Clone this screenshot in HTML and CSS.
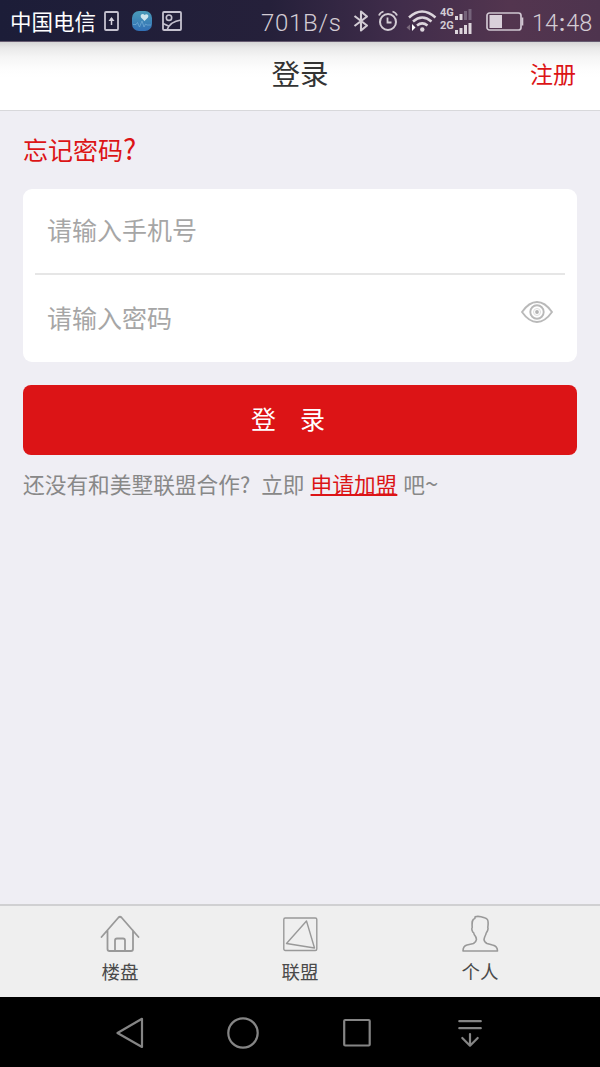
FILE: index.html
```html
<!DOCTYPE html>
<html lang="zh-CN">
<head>
<meta charset="utf-8">
<title>登录</title>
<link rel="stylesheet" href="styles.css">
</head>
<body>
<div class="statusbar">
  <span class="carrier">中国电信</span>
  <svg class="ic-upload" width="15" height="20" viewBox="0 0 15 20"><rect x="1" y="1" width="13" height="18" rx="1" fill="none" stroke="#c5c2cf" stroke-width="1.8"/><path d="M7.500 14V7" fill="none" stroke="#d5d2dc" stroke-width="1.500"/><path d="M4.500 10L7.500 6l3 4z" fill="#d5d2dc"/></svg>
  <svg class="ic-health" width="20" height="20" viewBox="0 0 20 20"><defs><linearGradient id="hg" x1="0" y1="0" x2="0" y2="1"><stop offset="0" stop-color="#4a9bb9"/><stop offset="1" stop-color="#316fb5"/></linearGradient></defs><rect width="20" height="20" rx="7" fill="url(#hg)"/><path d="M12.500 10L9 6.500C7.500 3.500 11 1.800 12.500 4c2-2 5-.3 3.500 2.500z" fill="#cde5ee"/><path d="M1 13.500h3l1.500-2 2 4.500L10 10l2 6 1.500-3L15 14h4" fill="none" stroke="#7fb6dc" stroke-width=".6"/></svg>
  <svg class="ic-picture" width="20" height="20" viewBox="0 0 20 20"><rect x="1" y="1" width="18" height="18" rx="1" fill="none" stroke="#c5c2cf" stroke-width="1.800"/><circle cx="7" cy="6.700" r="2.700" fill="none" stroke="#c5c2cf" stroke-width="1.600"/><path d="M1 12.500l5.500 2.500M5 19Q8 10.500 19 9" fill="none" stroke="#c5c2cf" stroke-width="1.700"/></svg>
  <span class="speed">701B/s</span>
  <svg class="ic-bt" width="16" height="22" viewBox="0 0 16 22"><path d="M1.500 6L14 15.500 8 20.500V1.500L14 6.500 1.500 16" fill="none" stroke="#d3cdd5" stroke-width="2.100" stroke-linejoin="round"/></svg>
  <svg class="ic-alarm" width="20" height="22" viewBox="0 0 20 22"><circle cx="10" cy="12" r="8" fill="none" stroke="#d3cdd5" stroke-width="2"/><path d="M9.500 7.500V12.500h4M1 5.500Q2 2.500 5.500 1.500M14.500 1.500Q18 2.500 19 5.500" fill="none" stroke="#d3cdd5" stroke-width="1.800"/></svg>
  <svg class="ic-wifi" width="32" height="24" viewBox="0 0 32 24"><g fill="none" stroke="#dcd5dc" stroke-width="2.500"><path d="M4 8.500Q17-3.500 30.500 8.500"/><path d="M8 12.500Q17.200 4.500 26.500 12.500"/><path d="M12 16.500Q17.200 12.200 22.500 16.500"/></g><circle cx="17.300" cy="20.500" r="2.200" fill="#dcd5dc"/><path d="M5 15.500v6L1.500 18.500z" fill="#7b6a7d"/><path d="M7 15v7L10.500 18.500z" fill="#fff"/></svg>
  <div class="signals">
    <div class="sig"><span>4G</span><svg width="17" height="12" viewBox="0 0 17 12"><path d="M0 8h3v4H0zM4.500 6h3v6h-3z" fill="#ddd5dc"/><path d="M9 3h3v9H9zM13.500 1h3v11h-3z" fill="#75637a"/></svg></div>
    <div class="sig"><span>2G</span><svg width="17" height="12" viewBox="0 0 17 12"><path d="M0 8h3v4H0zM4.500 6h3v6h-3zM9 3h3v9H9zM13.500 1h3v11h-3z" fill="#ddd5dc"/></svg></div>
  </div>
  <svg class="ic-battery" width="38" height="20" viewBox="0 0 38 20"><rect x="1" y="1" width="34" height="17" rx="2.500" fill="none" stroke="#d0c6d1" stroke-width="1.700"/><rect x="3.500" y="3" width="12.500" height="13" fill="#d9d0da"/><path d="M35.500 5.500h1.800v8h-1.800z" fill="#d0c6d1"/></svg>
  <span class="clock">14<span class="colon">:</span>48</span>
</div>
<header class="header"><h1 class="title">登录</h1><a class="register">注册</a></header>
<main class="content">
  <a class="forgot">忘记密码<span class="mark">?</span></a>
  <div class="card">
    <div class="field">请输入手机号</div>
    <div class="field field-password"><span>请输入密码</span>
      <svg class="eye" width="32" height="22" viewBox="0 0 32 22"><g fill="none" stroke="#b9b9b9" stroke-width="1.900"><path d="M1 11Q8 1 16 1T31 11Q24 21 16 21T1 11z" stroke-linejoin="round"/><circle cx="16" cy="11" r="6.700"/></g><circle cx="16" cy="11" r="3.500" fill="none" stroke="#ddd" stroke-width="1"/><circle cx="16" cy="11" r="1.900" fill="#b3b3b3"/></svg>
    </div>
  </div>
  <div class="login">登<span class="space"></span>录</div>
  <p class="join">还没有和美墅联盟合作?<span class="now">立即</span><a class="apply">申请加盟</a>吧<span class="tilde">~</span></p>
</main>
<nav class="tabs">
  <div class="tab"><svg width="40" height="38" viewBox="0 0 40 38"><g fill="none" stroke="#999" stroke-width="1.800" stroke-linecap="round" stroke-linejoin="round"><path d="M1.500 22L18.500 2.500Q20 1 21.500 2.500L38.500 22M7.500 15.500V34q0 2 2 2h21.500q2 0 2-2V15.500M15 36V25.500q0-2 2-2h6q2 0 2 2V36"/></g></svg><span>楼盘</span></div>
  <div class="tab"><svg width="40" height="38" viewBox="0 0 40 38"><g fill="none" stroke="#999" stroke-width="1.400" stroke-linejoin="round"><rect x="3.800" y="3" width="33" height="32.500" rx="1.500"/><path d="M26.500 6L6.500 28.500 34.500 33z"/></g></svg><span>联盟</span></div>
  <div class="tab"><svg width="40" height="38" viewBox="0 0 40 38"><path d="M3 36H37.500Q37.500 31 32.500 30L27 28.500C22.500 26 24 23 25.800 19.500Q26 18 27 16.800Q28.500 14 27.800 12.500C29 4 27 3.500 24.500 2.800Q18.500.500 15.200 1.800L14.800 3.500C11.500 4.500 12 8 12.200 12.500Q11.200 14.500 12.800 17Q14 17.500 14.200 19.500C17.500 23.500 17 26 13.500 28.500L7 30Q3 31 3 36z" fill="none" stroke="#999" stroke-width="1.600" stroke-linejoin="round"/></svg><span>个人</span></div>
</nav>
<footer class="sysnav">
  <svg width="28" height="32" viewBox="0 0 28 32"><path d="M1.500 16L26 1.800V30z" fill="none" stroke="#858585" stroke-width="2.200" stroke-linejoin="round"/></svg>
  <svg class="home" width="32" height="32" viewBox="0 0 32 32"><circle cx="16" cy="16" r="14.700" fill="none" stroke="#858585" stroke-width="2.200"/></svg>
  <svg class="recent" width="28" height="32" viewBox="0 0 28 32"><rect x="1.200" y="3" width="25.500" height="25.500" rx="1" fill="none" stroke="#858585" stroke-width="2.200"/></svg>
  <svg class="pull" width="24" height="32" viewBox="0 0 24 32"><path d="M1.300 4.200h21.500M1.300 11.200h21.500M12 17v11M4.300 21l7.700 7.700 7.700-7.700" fill="none" stroke="#858585" stroke-width="2.200" stroke-linecap="round" stroke-linejoin="round"/></svg>
</footer>
</body>
</html>
```
FILE: styles.css
```css
* { box-sizing: border-box; }
body {
  margin: 0;
  width: 600px;
  height: 1067px;
  display: flex;
  flex-direction: column;
  overflow: hidden;
  background: #efeef4;
  font-family: "Noto Sans CJK SC", sans-serif;
}
svg { display: block; flex: none; }
.statusbar {
  height: 42px;
  flex: none;
  display: flex;
  align-items: center;
  padding-left: 10px;
  border-bottom: 1px solid #665b70;
  background: linear-gradient(90deg, #1c1d38 0%, #25203a 45%, #412d4b 67%, #53354f 85%, #4e344e 100%);
  color: #d3ccd4;
  white-space: nowrap;
}
.carrier { width: 94px; font-size: 21.5px; line-height: 40px; padding-top: 1px; color: #fff; }
.ic-health { margin-left: 13px; }
.ic-picture { margin-left: 10px; }
.speed, .clock { font-family: Roboto, sans-serif; font-weight: 300; font-size: 24px; line-height: 40px; padding-top: 4px; }
.speed { margin-left: 79px; width: 92px; letter-spacing: .7px; }
.ic-alarm { margin-left: 9px; }
.ic-wifi { margin-left: 7px; }
.signals { margin-left: 3px; width: 33px; display: flex; flex-direction: column; gap: 1px; }
.sig { display: flex; align-items: flex-end; height: 12.5px; font: bold 11px/10px Roboto, sans-serif; }
.sig span { width: 15px; align-self: flex-start; }
.ic-battery { margin-left: 13px; margin-top: 2px; }
.clock { margin-left: 8px; font-size: 23.5px; }
.colon { margin: 0 1px; font-weight: 500; }
.header {
  height: 69px;
  flex: none;
  display: grid;
  grid-template-columns: 1fr auto 1fr;
  align-items: start;
  padding: 1px 24px 0;
  border-bottom: 1px solid #d8d8db;
  background: linear-gradient(#d6d6d6 0, #e9e9e9 6px, #f5f5f5 15px, #fdfdfd 27px, #fff 36px);
}
.title { grid-column: 2; margin: 0; font-weight: 400; font-size: 28.5px; line-height: 60px; color: #333; }
.register { justify-self: end; font-size: 23px; line-height: 61px; color: #dc1416; }
.content { flex: 1; padding: 18px 23px 0; }
.forgot { display: block; font-size: 25px; line-height: 40px; height: 60px; color: #dc1416; }
.mark { font-size: 28px; line-height: 1; }
.card { height: 173px; padding: 0 12px; border-radius: 9px; background: #fff; }
.field { height: 86px; padding: 0 12px; font-size: 25px; line-height: 80px; color: #a6a6a6; border-bottom: 2px solid #e6e6e6; }
.field-password { display: flex; justify-content: space-between; border: 0; line-height: 85px; }
.eye { margin-top: 26px; }
.login { display: flex; justify-content: center; height: 70px; margin-top: 23px; padding-right: 24px; border-radius: 8px; background: #dc1416; color: #fff; font-size: 25px; line-height: 67px; }
.space { width: 24px; }
.join { margin: 10px 0 0; font-size: 21.7px; line-height: 38px; color: #888; white-space: nowrap; }
.now { margin-left: 11px; }
.apply { margin: 0 6px; color: #dc1416; text-decoration: underline; text-decoration-thickness: 1.5px; text-underline-offset: 1px; }
.tilde { font-size: 24px; line-height: 1; }
.tabs { height: 93px; flex: none; display: flex; padding: 0 30px; border-top: 2px solid #d0d0d2; background: #efefef; }
.tab { flex: 1; display: flex; flex-direction: column; align-items: center; padding-top: 9px; font-size: 18.5px; line-height: 37px; color: #4a4a4a; }
.sysnav { height: 70px; flex: none; display: flex; align-items: center; padding: 1px 0 0 116px; background: #000; }
.home { margin-left: 83px; }
.recent { margin-left: 84px; }
.pull { margin-left: 87px; }
```
